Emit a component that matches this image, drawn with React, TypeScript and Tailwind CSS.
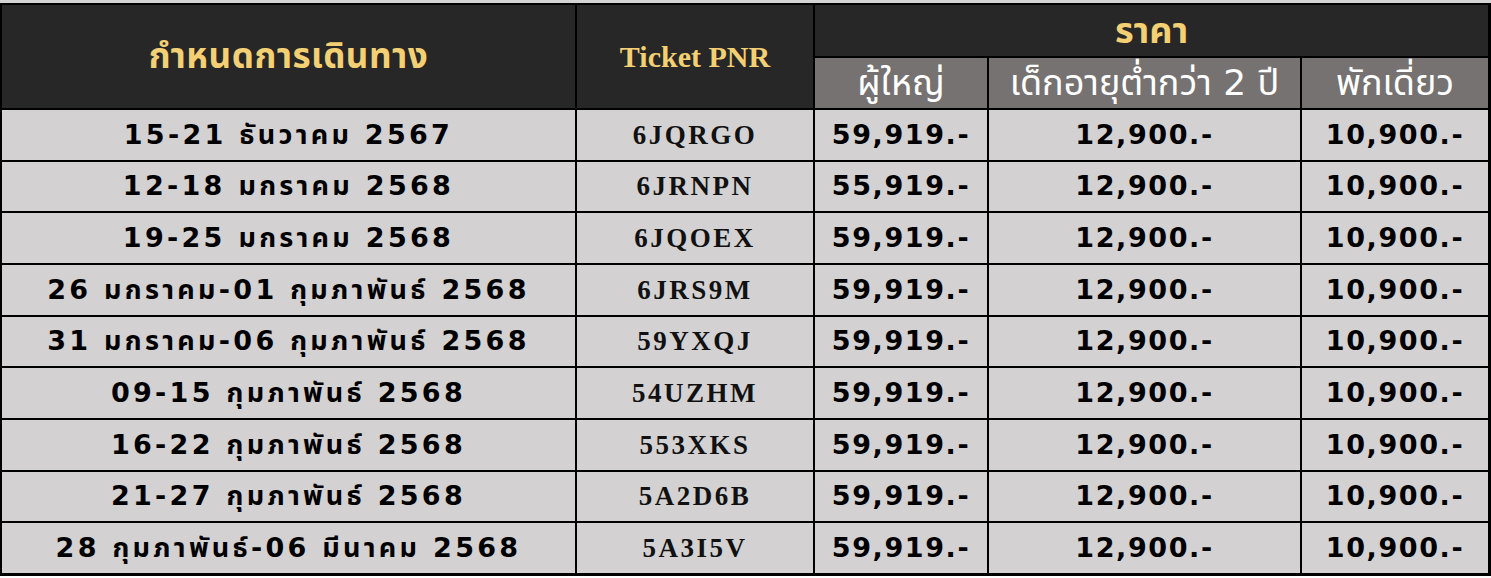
import React from 'react';

const rows = [
	{ date: '15-21 ธันวาคม 2567', pnr: '6JQRGO', adult: '59,919.-' },
	{ date: '12-18 มกราคม 2568', pnr: '6JRNPN', adult: '55,919.-' },
	{ date: '19-25 มกราคม 2568', pnr: '6JQOEX', adult: '59,919.-' },
	{ date: '26 มกราคม-01 กุมภาพันธ์ 2568', pnr: '6JRS9M', adult: '59,919.-' },
	{ date: '31 มกราคม-06 กุมภาพันธ์ 2568', pnr: '59YXQJ', adult: '59,919.-' },
	{ date: '09-15 กุมภาพันธ์ 2568', pnr: '54UZHM', adult: '59,919.-' },
	{ date: '16-22 กุมภาพันธ์ 2568', pnr: '553XKS', adult: '59,919.-' },
	{ date: '21-27 กุมภาพันธ์ 2568', pnr: '5A2D6B', adult: '59,919.-' },
	{ date: '28 กุมภาพันธ์-06 มีนาคม 2568', pnr: '5A3I5V', adult: '59,919.-' },
];

const sans = "font-['DejaVu_Sans','Noto_Sans_Thai',sans-serif]";

function App() {
	return (
		<div className="w-[1491px] h-[578px] bg-white">
			<div className="h-[3px] bg-[#d4d4d4]"></div>
			<div
				className="grid h-[573px] bg-black pl-[2px] pt-[2px] pr-[3px] pb-[3px] gap-[2px]
        grid-cols-[573px_236px_172px_311px_186px] grid-rows-[51px_50px_repeat(9,1fr)]"
			>
				<div
					className={`row-span-2 bg-[#272727] flex items-center justify-center text-[35px] font-bold tracking-[0.5px] text-[#f3d073] ${sans}`}
				>
					กำหนดการเดินทาง
				</div>
				<div className="row-span-2 bg-[#272727] flex items-center justify-center text-[30px] font-bold text-[#f3d073] font-['Liberation_Serif',serif]">
					Ticket PNR
				</div>
				<div
					className={`col-span-3 bg-[#272727] flex items-center justify-center text-[36px] font-bold text-[#f3d073] ${sans}`}
				>
					ราคา
				</div>
				<div className={`bg-[#767271] flex items-center justify-center text-[36px] text-white ${sans}`}>
					ผู้ใหญ่
				</div>
				<div className={`bg-[#767271] flex items-center justify-center text-[36px] text-white ${sans}`}>
					เด็กอายุต่ำกว่า 2 ปี
				</div>
				<div className={`bg-[#767271] flex items-center justify-center text-[36px] text-white ${sans}`}>
					พักเดี่ยว
				</div>

				{rows.map((row, i) => (
					<React.Fragment key={i}>
						<div
							className={`bg-[#d3d1d1] flex items-center justify-center text-[27px] font-bold tracking-[3.3px] text-black ${sans}`}
						>
							{row.date}
						</div>
						<div className="bg-[#d3d1d1] flex items-center justify-center text-[27px] font-bold tracking-[2.5px] text-[#111] font-['Liberation_Serif',serif]">
							{row.pnr}
						</div>
						<div
							className={`bg-[#d3d1d1] flex items-center justify-center text-[27px] font-bold tracking-[1.6px] text-black ${sans}`}
						>
							{row.adult}
						</div>
						<div
							className={`bg-[#d3d1d1] flex items-center justify-center text-[27px] font-bold tracking-[1.6px] text-black ${sans}`}
						>
							12,900.-
						</div>
						<div
							className={`bg-[#d3d1d1] flex items-center justify-center text-[27px] font-bold tracking-[1.6px] text-black ${sans}`}
						>
							10,900.-
						</div>
					</React.Fragment>
				))}
			</div>
		</div>
	);
}

export default App;
